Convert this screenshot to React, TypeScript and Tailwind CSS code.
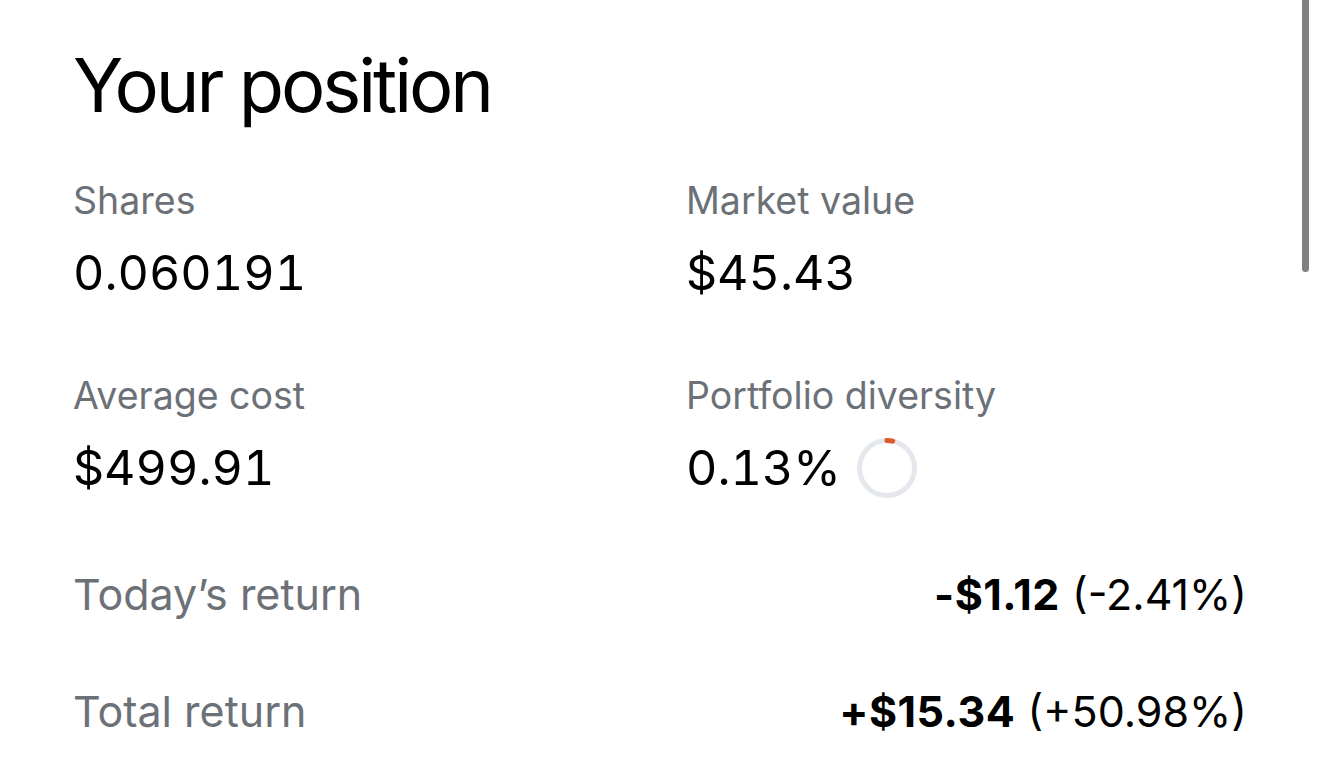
import React from "react";

const font = { fontFamily: "Inter, 'Liberation Sans', sans-serif" };

function Stat({ label, value, extra }: { label: string; value: string; extra?: React.ReactNode }) {
  return (
    <div className="flex flex-col">
      <p className="text-[37.5px] leading-none text-[#6c7178]">{label}</p>
      <div className="mt-[28.5px] flex h-[50px] items-center gap-[15px]">
        <p className="text-[48.5px] leading-none tabular-nums text-black">{value}</p>
        {extra}
      </div>
    </div>
  );
}

function DiversityRing() {
  return (
    <svg className="-my-[6px]" width="62" height="62" viewBox="0 0 62 62">
      <circle cx="31" cy="31" r="27.5" fill="none" stroke="#e4e7eb" strokeWidth="5" />
      <path d="M31 3.5 A27.5 27.5 0 0 1 36.7 4.1" fill="none" stroke="#e0592a" strokeWidth="5" strokeLinecap="round" />
    </svg>
  );
}

function ReturnRow({ label, amount, pct }: { label: string; amount: string; pct: string }) {
  return (
    <div className="flex items-center justify-between text-[43px] leading-none">
      <span className="text-[#6c7178]">{label}</span>
      <span className="text-black">
        <span className="font-bold tracking-[0.5px]">{amount}</span> {pct}
      </span>
    </div>
  );
}

export default function App() {
  return (
    <div className="relative h-[781px] w-[1320px] overflow-hidden bg-white" style={font}>
      <div className="pl-[73px] pr-[73px] pt-[48px]">
        <h1 className="text-[74px] leading-none font-normal tracking-[-3.1px] text-black">Your position</h1>
        <div className="mt-[60px] grid grid-cols-[613px_1fr] gap-y-[79px]">
          <Stat label="Shares" value="0.060191" />
          <Stat label="Market value" value="$45.43" />
          <Stat label="Average cost" value="$499.91" />
          <Stat label="Portfolio diversity" value="0.13%" extra={<DiversityRing />} />
        </div>
        <div className="mt-[80px] flex flex-col gap-[74px]">
          <ReturnRow label="Today’s return" amount="-$1.12" pct="(-2.41%)" />
          <ReturnRow label="Total return" amount="+$15.34" pct="(+50.98%)" />
        </div>
      </div>
      <div className="absolute right-[11px] top-0 h-[272px] w-[7px] rounded-b-full bg-[#808080]" />
    </div>
  );
}
